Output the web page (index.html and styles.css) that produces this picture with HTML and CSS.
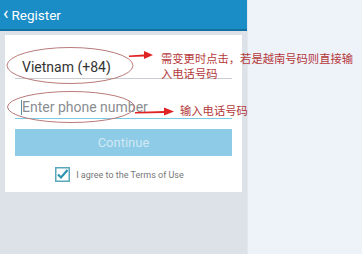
FILE: index.html
```html
<!DOCTYPE html>
<html>
<head>
<meta charset="utf-8">
<link rel="stylesheet" href="styles.css">
</head>
<body>
<div class="page">
  <div class="phone">
    <div class="header"><span class="chev">&#x2039;</span><span class="title">Register</span></div>
    <div class="body">
      <div class="card">
        <div class="row country">Vietnam (+84)</div>
        <div class="row phone-input">Enter phone number</div>
        <div class="btn">Continue</div>
        <div class="agree">
          <svg class="cb" width="15" height="15" viewBox="0 0 15 15"><rect x="0.75" y="0.75" width="13.5" height="13.5" fill="#fff" stroke="#5aa6bb" stroke-width="1.5"/><path d="M3 7.5 L6 10.5 L12.5 3" fill="none" stroke="#2c93b0" stroke-width="2.2"/></svg>
          <span>I agree to the Terms of Use</span>
        </div>
      </div>
    </div>
  </div>
  <div class="side"></div>
  <div class="notes">
    <svg class="ann" width="362" height="254" viewBox="0 0 362 254">
      <ellipse cx="70" cy="65.5" rx="63" ry="18" fill="none" stroke="#b97a7a" stroke-width="1"/>
      <ellipse cx="71" cy="107" rx="63.5" ry="15.5" fill="none" stroke="#b97a7a" stroke-width="1"/>
      <path d="M129 55.5 L144 54.5 L144 51 L153 55 L144 59 L144 56.5 L129 57 Z" fill="#e02424"/>
      <path d="M135 112 L164 111 L164 107.5 L174 111.5 L164 115.5 L164 113 L135 113.5 Z" fill="#e02424"/>
    </svg>
    <div class="note1">需变更时点击，若是越南号码则直接输<br>入电话号码</div>
    <div class="note2">输入电话号码</div>
  </div>
</div>
</body>
</html>
```
FILE: styles.css
```css
html, body {
  margin: 0;
  padding: 0;
}
body {
  width: 362px;
  height: 254px;
  overflow: hidden;
  font-family: Roboto, "Noto Sans", sans-serif;
}
.page {
  position: relative;
  display: flex;
  width: 362px;
  height: 254px;
}
.phone {
  width: 247px;
  display: flex;
  flex-direction: column;
  background: #dde2e8;
}
.header {
  height: 29px;
  background: #1a8dc6;
  border-bottom: 2px solid #136f9e;
  display: flex;
  align-items: center;
  color: #fff;
  padding-left: 3px;
}
.chev {
  font-size: 18px;
  line-height: 1;
  margin-top: -3px;
  margin-right: 3px;
}
.title {
  font-size: 13.5px;
  margin-top: 1px;
}
.body {
  flex: 1;
  padding: 4px 5px 0 5px;
}
.card {
  background: #fff;
  height: 157px;
  width: 237px;
  padding: 0 10px;
  box-sizing: border-box;
  display: flex;
  flex-direction: column;
}
.row {
  height: 36px;
  display: flex;
  align-items: flex-end;
  padding-left: 7px;
  padding-bottom: 3px;
  box-sizing: border-box;
  font-size: 14px;
}
.country {
  margin-top: 8px;
  color: #333;
  border-bottom: 1px solid #c9cdd1;
}
.phone-input {
  margin-top: 3px;
  height: 37px;
  padding-bottom: 3px;
  color: #8a8e92;
  border-bottom: 1px solid #7ccbe3;
  position: relative;
}
.phone-input::before {
  content: "";
  position: absolute;
  left: 6px;
  bottom: 3px;
  width: 1px;
  height: 15px;
  background: #5a8fa8;
}
.btn {
  margin-top: 10px;
  height: 27px;
  background: #8ecbe6;
  color: #cfe9f5;
  font-size: 13px;
  display: flex;
  align-items: center;
  justify-content: center;
}
.agree {
  margin-top: 11px;
  display: flex;
  align-items: center;
  justify-content: center;
  gap: 6px;
  font-size: 9px;
  color: #777;
  padding-right: 8px;
}
.cb {
  display: block;
}
.side {
  flex: 1;
  background: #eef2f9;
  border-left: 1px solid #e3e7ee;
}
.notes {
  position: absolute;
  left: 0;
  top: 0;
  width: 362px;
  height: 254px;
  pointer-events: none;
}
.ann {
  position: absolute;
  left: 0;
  top: 0;
}
.note1 {
  position: absolute;
  left: 161px;
  top: 51px;
  font-family: "Noto Sans CJK SC", sans-serif;
  font-size: 11.3px;
  line-height: 15px;
  color: #b5393c;
  white-space: nowrap;
}
.note2 {
  position: absolute;
  left: 180px;
  top: 103px;
  font-family: "Noto Sans CJK SC", sans-serif;
  font-size: 11.3px;
  line-height: 14px;
  color: #b5393c;
  white-space: nowrap;
}
```
